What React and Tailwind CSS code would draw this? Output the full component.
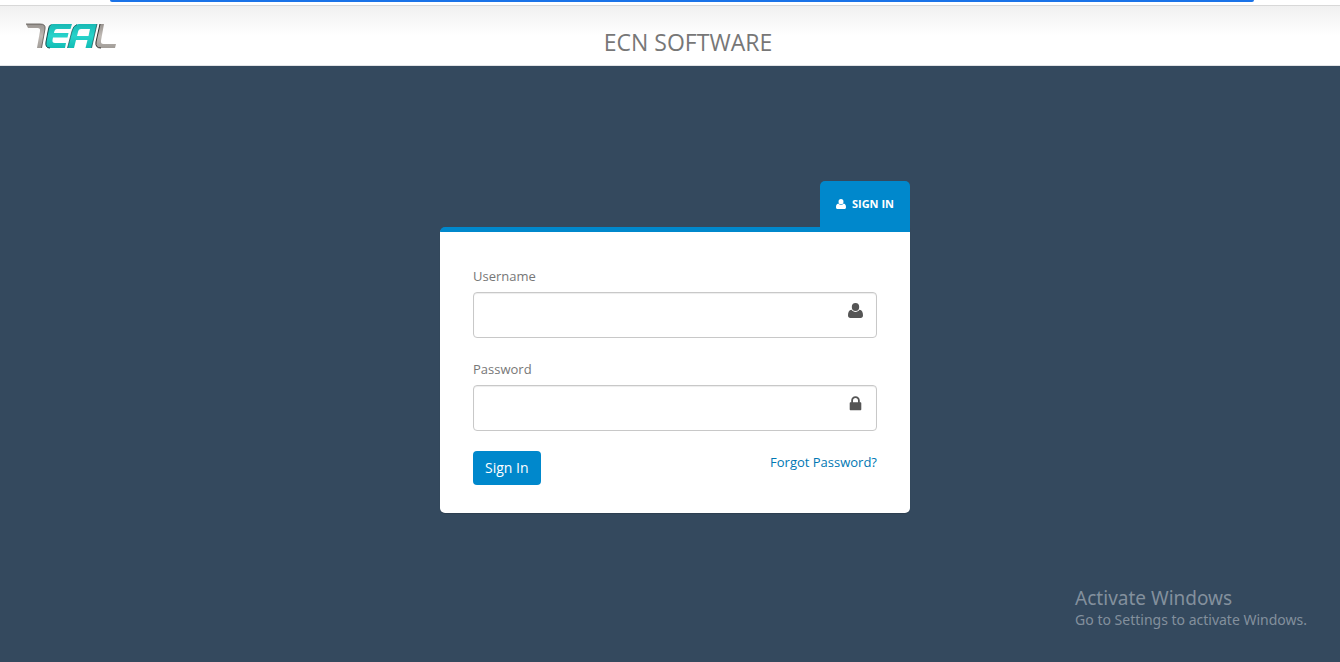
import React from "react";

function UserIcon({ className }) {
  return (
    <svg viewBox="0 0 15 15" fill="currentColor" aria-hidden="true" className={className}>
      <ellipse cx="7.5" cy="4" rx="3.7" ry="4" />
      <path d="M3.500 6.800C4.500 8.200 5.900 8.900 7.500 8.900S10.500 8.200 11.500 6.800C14 7.100 15 9.300 15 12.300C15 14 14.100 15 12.600 15H2.400C0.900 15 0 14 0 12.300C0 9.300 1 7.100 3.500 6.800Z" />
    </svg>
  );
}

function LockIcon({ className }) {
  return (
    <svg viewBox="0 0 15 15" fill="currentColor" aria-hidden="true" className={className}>
      <path
        fillRule="evenodd"
        d="M3.200 6.300V4.600C3.200 2 5 0.300 7.500 0.300S11.800 2 11.800 4.600V6.300H12.300C12.900 6.300 13.300 6.700 13.300 7.300V13.300C13.300 13.900 12.900 14.300 12.300 14.300H2.700C2.100 14.300 1.700 13.900 1.700 13.300V7.300C1.700 6.700 2.100 6.300 2.700 6.300ZM5 6.300H10V4.600C10 3 9 2 7.500 2S5 3 5 4.600Z"
      />
    </svg>
  );
}

function Logo() {
  return (
    <svg viewBox="0 0 92 28" className="h-7 w-23" role="img" aria-label="TEAL" fill="none">
      <defs>
        <linearGradient id="metal" x1="0" y1="0" x2="0" y2="1">
          <stop offset="0" stopColor="#98938f" />
          <stop offset="0.5" stopColor="#c0bab5" />
          <stop offset="1" stopColor="#a29d98" />
        </linearGradient>
        <linearGradient id="teal" x1="0" y1="0" x2="0" y2="1">
          <stop offset="0" stopColor="#18b9b4" />
          <stop offset="0.5" stopColor="#27d3cb" />
          <stop offset="1" stopColor="#12bdb5" />
        </linearGradient>
      </defs>
      <path d="M1 2H15Q21 2 20 7L16.500 26H12L15 9Q15.500 6 12.500 6H3Z" fill="url(#metal)" />
      <path d="M1 2H15Q21 2 20 7L16.500 26" stroke="#55504c" strokeWidth="0.8" />
      <path d="M28 2H47L45.500 7H32Q29.500 7 29 11H43.500L42.500 15.500H28L27.500 18Q27 21 30 21H41L40 26H25Q20 26 21 20L23.500 7Q24.500 2 28 2Z" fill="url(#teal)" />
      <path d="M26 2.500Q24 3.500 23.500 7L21 20Q20 26 25 26" stroke="#16494a" strokeWidth="1" />
      <path d="M54 2H72L66.500 26H60.500L62.500 18H51L49 26H42.500L47 9Q49 2 54 2ZM56 7Q53.500 7 53 10L52 14H63.500L65 7Z" fill="url(#teal)" fillRule="evenodd" />
      <path d="M52 2.500Q48 4 47 9L42.500 26M72 2L66.500 26" stroke="#16494a" strokeWidth="0.7" />
      <path d="M75 2H79L76 18.500Q75.500 22 78.500 22H91L90 26H76Q70 26 71 20Z" fill="url(#metal)" />
      <path d="M75 2L71 20Q70 26 76 26" stroke="#35312f" strokeWidth="1" />
    </svg>
  );
}

function Field({ id, label, type, icon: FieldIcon }) {
  return (
    <div>
      <label htmlFor={id} className="block text-[13px] leading-5 text-[#777777]">
        {label}
      </label>
      <div className="relative mt-1.5">
        <input
          id={id}
          type={type}
          className="block h-[46px] w-full rounded-[4px] border border-[#c8c8c8] bg-white pl-4 pr-12 text-base text-[#555555] shadow-[inset_0_1px_1px_rgba(0,0,0,0.075)] outline-none focus:border-[#0088cc]"
        />
        <FieldIcon className="pointer-events-none absolute right-3.5 top-[11px] size-[15px] text-[#555555]" />
      </div>
    </div>
  );
}

export default function App() {
  return (
    <div className="flex min-h-screen flex-col bg-[#34495e] font-['Open_Sans',sans-serif]">
      <div className="h-[5px] bg-white px-[86px]">
        <div className="ml-6 h-0.5 rounded-b-full bg-[#1a73e8]" />
      </div>
      <header className="grid h-[61px] grid-cols-[1fr_auto_1fr] border-y border-t-[#d8d8d8] border-b-[#e2e4e7] bg-linear-to-b from-[#f0f0f0] to-white to-50%">
        <a href="#home" className="ml-[25px] mt-4 self-start justify-self-start">
          <Logo />
        </a>
        <h1 className="ml-9 mt-5 text-[23px] leading-8 text-[#777777]">ECN SOFTWARE</h1>
      </header>
      <main className="flex flex-1 justify-center pl-2.5 pt-[115px]">
        <div className="w-full max-w-[470px]">
          <div className="flex justify-end">
            <h2 className="flex h-[46px] items-center gap-1.5 rounded-t-[5px] bg-[#0088cc] px-4 text-[11px] font-bold text-white">
              <UserIcon className="size-2.5" />
              SIGN IN
            </h2>
          </div>
          <form
            className="rounded-[5px] rounded-tr-none border-t-[5px] border-[#0088cc] bg-white px-[33px] pb-7 pt-[34px] shadow-[0_1px_1px_rgba(0,0,0,0.15)]"
            onSubmit={(e) => e.preventDefault()}
          >
            <div className="flex flex-col gap-[21px]">
              <Field id="username" label="Username" type="text" icon={UserIcon} />
              <Field id="password" label="Password" type="password" icon={LockIcon} />
            </div>
            <div className="mt-5 flex items-start justify-between">
              <button type="submit" className="h-[34px] rounded-[4px] bg-[#0088cc] px-3 pb-0.5 text-[14px] text-white">
                Sign In
              </button>
              <a href="#forgot" className="text-[13px] leading-[22px] text-[#0077b3]">
                Forgot Password?
              </a>
            </div>
          </form>
        </div>
      </main>
      <aside className="mb-8 mr-[33px] self-end font-['Noto_Sans',sans-serif] text-[#83909d]">
        <p className="text-[19px] leading-6">Activate Windows</p>
        <p className="text-[14px] leading-5">Go to Settings to activate Windows.</p>
      </aside>
    </div>
  );
}
